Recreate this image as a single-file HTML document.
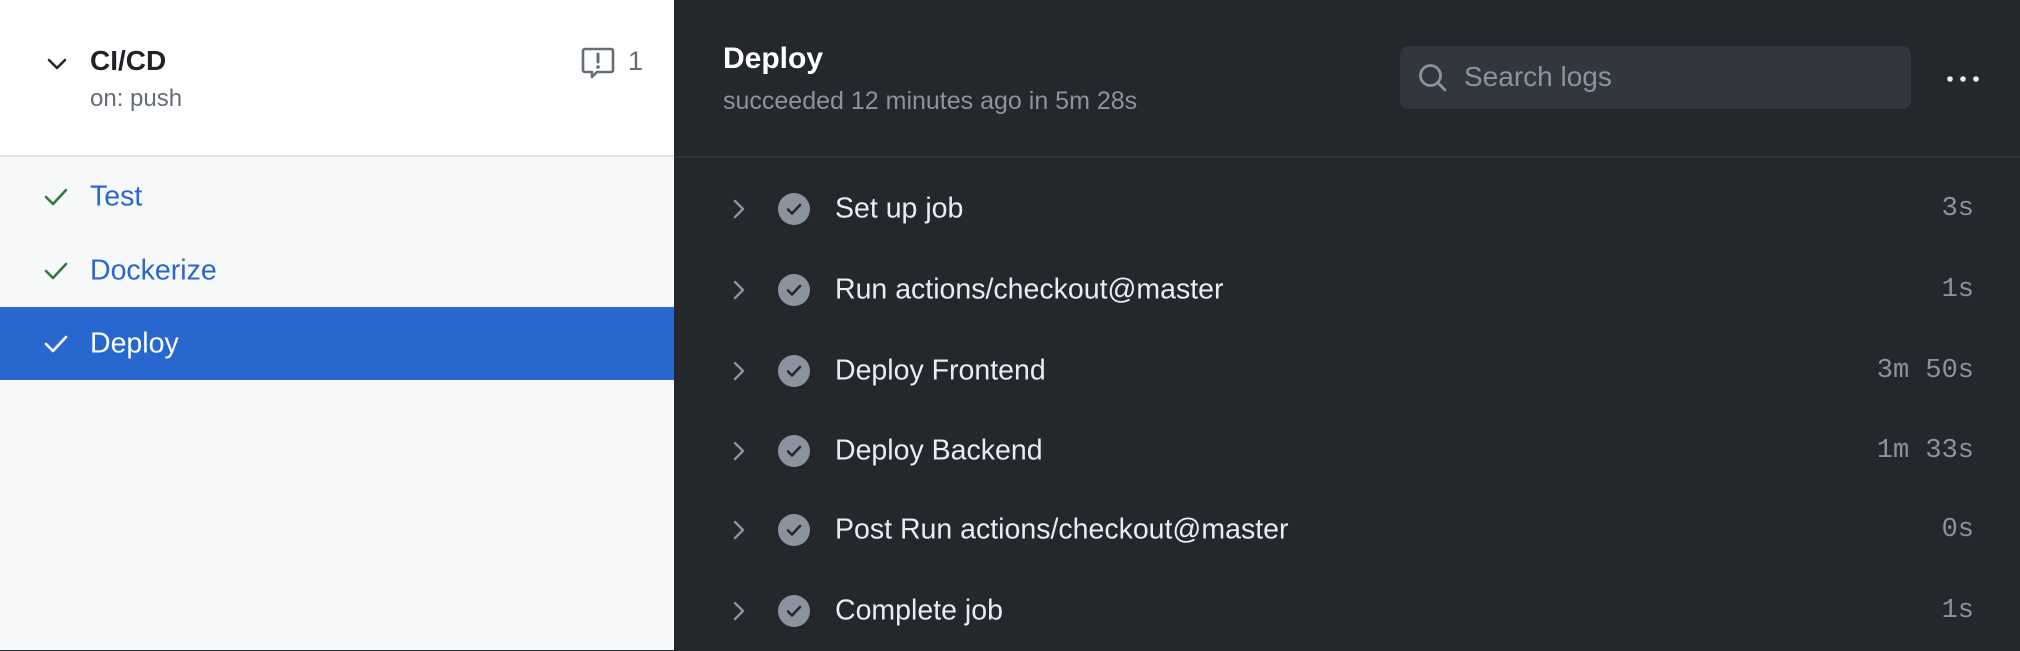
<!DOCTYPE html>
<html><head><meta charset="utf-8"><style>
*{margin:0;padding:0;box-sizing:border-box}
body{width:2020px;height:650px;overflow:hidden;font-family:"Liberation Sans",sans-serif;position:relative;background:#24272c}
.left{position:absolute;left:0;top:0;width:674px;height:650px;background:#f6f8fa}
.lh{position:absolute;left:0;top:0;width:674px;height:157px;background:#fff;border-bottom:2px solid #e1e4e8}
.abs{position:absolute;white-space:nowrap}
.job{position:absolute;left:0;width:674px;height:74px;font-size:28.5px;color:#2a67cd}
.job span{position:absolute;left:90px;top:50%;transform:translateY(-50%)}
.job svg{position:absolute;left:44px;top:50%;transform:translateY(-50%)}
.right{position:absolute;left:674px;top:0;width:1346px;height:650px;background:#24272c}
.sep{position:absolute;left:674px;top:156px;width:1346px;height:2px;background:#30343a}
.step{position:absolute;left:674px;width:1346px;height:80px}
.step .n{position:absolute;left:161px;top:50%;transform:translateY(-50%);font-size:28.5px;color:#e6edf3}
.step .t{position:absolute;right:46px;top:50%;transform:translateY(-50%);font-family:"Liberation Mono",monospace;font-size:27px;color:#8b949e}
.step .c{position:absolute;left:57px;top:50%;transform:translateY(-50%)}
.step .o{position:absolute;left:104px;top:50%;transform:translateY(-50%)}
</style></head><body>
<div class="left">
 <div class="lh">
  <svg class="abs" style="left:47px;top:57px" width="20" height="14" viewBox="0 0 20 14"><path d="M2 3l8 8 8-8" fill="none" stroke="#24292f" stroke-width="2.6" stroke-linecap="round" stroke-linejoin="round"/></svg>
  <div class="abs" style="left:90px;top:45px;font-size:28px;font-weight:bold;color:#1f2328">CI/CD</div>
  <div class="abs" style="left:90px;top:85px;font-size:24px;color:#656d76">on: push</div>
  <svg class="abs" style="left:581px;top:46px" width="34" height="34" viewBox="0 0 34 34"><path d="M4 3h26a2 2 0 0 1 2 2v19a2 2 0 0 1-2 2H16l-5 5v-5H4a2 2 0 0 1-2-2V5a2 2 0 0 1 2-2z" fill="none" stroke="#656d76" stroke-width="2.6" stroke-linejoin="round"/><path d="M17 8v8" stroke="#656d76" stroke-width="3" stroke-linecap="round"/><circle cx="17" cy="21" r="1.8" fill="#656d76"/></svg>
  <div class="abs" style="left:628px;top:46px;font-size:27px;color:#656d76">1</div>
 </div>
 <div class="job" style="top:160px"><svg width="24" height="20" viewBox="0 0 24 20"><path d="M2 10l7 7L22 3" fill="none" stroke="#2f7d3a" stroke-width="2.6" stroke-linecap="round" stroke-linejoin="round"/></svg><span>Test</span></div>
 <div class="job" style="top:234px"><svg width="24" height="20" viewBox="0 0 24 20"><path d="M2 10l7 7L22 3" fill="none" stroke="#2f7d3a" stroke-width="2.6" stroke-linecap="round" stroke-linejoin="round"/></svg><span>Dockerize</span></div>
 <div class="job" style="top:307px;height:73px;background:#2867ce;color:#fff"><svg width="24" height="20" viewBox="0 0 24 20"><path d="M2 10l7 7L22 3" fill="none" stroke="#fff" stroke-width="2.6" stroke-linecap="round" stroke-linejoin="round"/></svg><span>Deploy</span></div>
</div>
<div class="right">
 <div class="abs" style="left:49px;top:42px;font-size:30px;font-weight:bold;color:#fff">Deploy</div>
 <div class="abs" style="left:49px;top:87px;font-size:25px;color:#8b949e">succeeded 12 minutes ago in 5m 28s</div>
 <div class="abs" style="left:726px;top:46px;width:511px;height:63px;border-radius:9px;background:#32363e"></div>
 <svg class="abs" style="left:744px;top:63px" width="30" height="30" viewBox="0 0 30 30"><circle cx="12.5" cy="12.5" r="10" fill="none" stroke="#8b949e" stroke-width="2.8"/><path d="M20 20l7 7" stroke="#8b949e" stroke-width="2.8" stroke-linecap="round"/></svg>
 <div class="abs" style="left:790px;top:61px;font-size:28px;color:#8b949e">Search logs</div>
 <svg class="abs" style="left:1272px;top:74px" width="34" height="10" viewBox="0 0 34 10"><circle cx="4" cy="5" r="2.8" fill="#e6edf3"/><circle cx="17" cy="5" r="2.8" fill="#e6edf3"/><circle cx="30" cy="5" r="2.8" fill="#e6edf3"/></svg>
</div>
<div class="sep"></div>
<div class="step" style="top:169px"><svg class="c" width="16" height="22" viewBox="0 0 16 22"><path d="M4 3l8 8-8 8" fill="none" stroke="#8b949e" stroke-width="2.4" stroke-linecap="round" stroke-linejoin="round"/></svg><svg class="o" width="32" height="32" viewBox="0 0 32 32"><circle cx="16" cy="16" r="16" fill="#8b949e"/><path d="M10 16.5l4 4 8-8.5" fill="none" stroke="#24272c" stroke-width="2.6" stroke-linecap="round" stroke-linejoin="round"/></svg><span class="n">Set up job</span><span class="t">3s</span></div>
<div class="step" style="top:250px"><svg class="c" width="16" height="22" viewBox="0 0 16 22"><path d="M4 3l8 8-8 8" fill="none" stroke="#8b949e" stroke-width="2.4" stroke-linecap="round" stroke-linejoin="round"/></svg><svg class="o" width="32" height="32" viewBox="0 0 32 32"><circle cx="16" cy="16" r="16" fill="#8b949e"/><path d="M10 16.5l4 4 8-8.5" fill="none" stroke="#24272c" stroke-width="2.6" stroke-linecap="round" stroke-linejoin="round"/></svg><span class="n">Run actions/checkout@master</span><span class="t">1s</span></div>
<div class="step" style="top:331px"><svg class="c" width="16" height="22" viewBox="0 0 16 22"><path d="M4 3l8 8-8 8" fill="none" stroke="#8b949e" stroke-width="2.4" stroke-linecap="round" stroke-linejoin="round"/></svg><svg class="o" width="32" height="32" viewBox="0 0 32 32"><circle cx="16" cy="16" r="16" fill="#8b949e"/><path d="M10 16.5l4 4 8-8.5" fill="none" stroke="#24272c" stroke-width="2.6" stroke-linecap="round" stroke-linejoin="round"/></svg><span class="n">Deploy Frontend</span><span class="t">3m 50s</span></div>
<div class="step" style="top:411px"><svg class="c" width="16" height="22" viewBox="0 0 16 22"><path d="M4 3l8 8-8 8" fill="none" stroke="#8b949e" stroke-width="2.4" stroke-linecap="round" stroke-linejoin="round"/></svg><svg class="o" width="32" height="32" viewBox="0 0 32 32"><circle cx="16" cy="16" r="16" fill="#8b949e"/><path d="M10 16.5l4 4 8-8.5" fill="none" stroke="#24272c" stroke-width="2.6" stroke-linecap="round" stroke-linejoin="round"/></svg><span class="n">Deploy Backend</span><span class="t">1m 33s</span></div>
<div class="step" style="top:490px"><svg class="c" width="16" height="22" viewBox="0 0 16 22"><path d="M4 3l8 8-8 8" fill="none" stroke="#8b949e" stroke-width="2.4" stroke-linecap="round" stroke-linejoin="round"/></svg><svg class="o" width="32" height="32" viewBox="0 0 32 32"><circle cx="16" cy="16" r="16" fill="#8b949e"/><path d="M10 16.5l4 4 8-8.5" fill="none" stroke="#24272c" stroke-width="2.6" stroke-linecap="round" stroke-linejoin="round"/></svg><span class="n">Post Run actions/checkout@master</span><span class="t">0s</span></div>
<div class="step" style="top:571px"><svg class="c" width="16" height="22" viewBox="0 0 16 22"><path d="M4 3l8 8-8 8" fill="none" stroke="#8b949e" stroke-width="2.4" stroke-linecap="round" stroke-linejoin="round"/></svg><svg class="o" width="32" height="32" viewBox="0 0 32 32"><circle cx="16" cy="16" r="16" fill="#8b949e"/><path d="M10 16.5l4 4 8-8.5" fill="none" stroke="#24272c" stroke-width="2.6" stroke-linecap="round" stroke-linejoin="round"/></svg><span class="n">Complete job</span><span class="t">1s</span></div>
</body></html>
